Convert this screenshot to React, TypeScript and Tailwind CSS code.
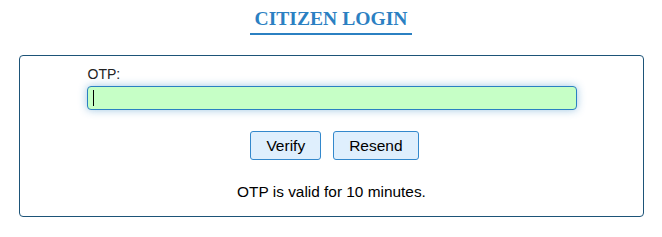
import { useEffect, useRef } from "react";

const App = () => {
  const inputRef = useRef<HTMLInputElement>(null);

  useEffect(() => {
    inputRef.current?.focus();
  }, []);

  return (
    <div className="w-[662px] h-[237px] bg-white font-['Liberation_Sans',Arial,sans-serif] text-black">
      <div className="flex justify-center pt-[9px]">
        <h2 className="px-[5px] pb-[4px] border-b-2 border-[#2b80c2] font-['Liberation_Serif','Times_New_Roman',serif] text-[19.6px] font-bold leading-[20px] text-[#2b80c2]">
          CITIZEN LOGIN
        </h2>
      </div>

      <div className="ml-[19px] mr-[18px] mt-[20px] h-[162px] rounded-[4px] border border-[#1d5478] pt-[8px]">
        <div className="mx-auto w-[490px]">
          <label className="block pl-[1px] text-[14px] leading-[20px] text-[#222]">OTP:</label>
          <div className="relative mt-[2px]">
            <input
              ref={inputRef}
              type="text"
              className="block h-[24px] w-[490px] rounded-[4px] border border-[#2b80c2] bg-[#c6ffc6] px-[5px] text-[15px] caret-transparent outline-none shadow-[0_0_8px_rgba(43,128,194,0.45)]"
            />
            <span className="pointer-events-none absolute left-[6px] top-[4px] h-[16px] w-[1px] bg-black" />
          </div>
        </div>

        <div className="mt-[21px] flex justify-center gap-[12px] pl-[6px]">
          <button className="h-[29px] rounded-[3px] border border-[#3388cc] bg-[#dfeffd] px-[15px] text-[15.5px] leading-[18px]">
            Verify
          </button>
          <button className="h-[29px] rounded-[3px] border border-[#3388cc] bg-[#dfeffd] px-[15px] text-[15.5px] leading-[18px]">
            Resend
          </button>
        </div>

        <p className="mt-[23px] text-center text-[15.4px] leading-[18px]">OTP is valid for 10 minutes.</p>
      </div>
    </div>
  );
};

export default App;
